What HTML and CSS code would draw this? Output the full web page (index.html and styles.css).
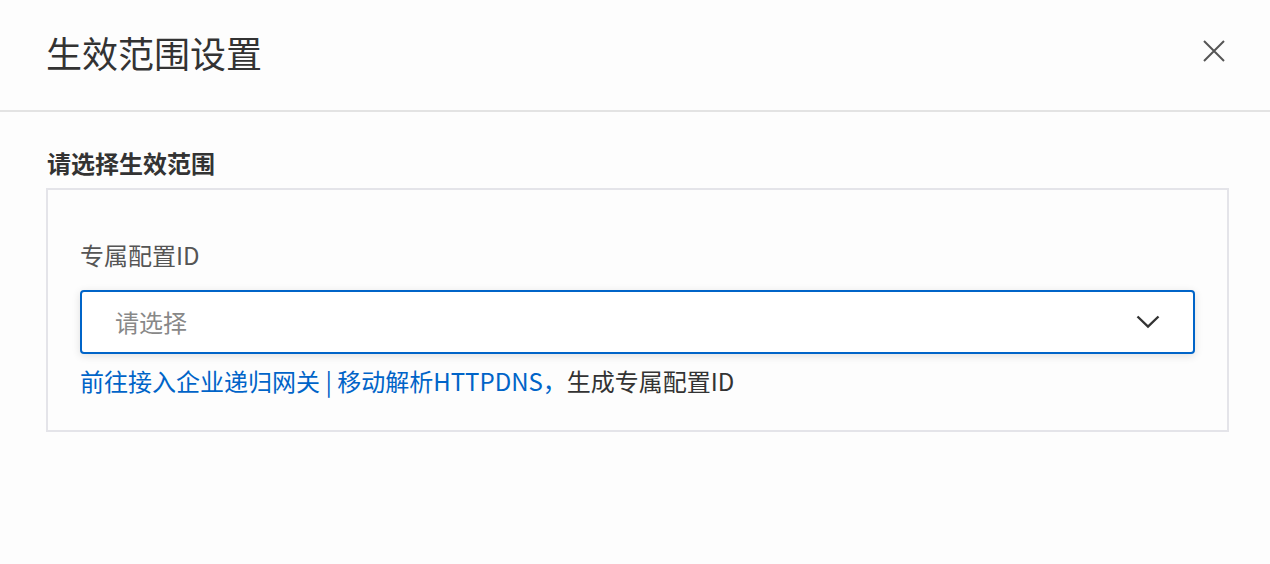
FILE: index.html
```html
<!DOCTYPE html>
<html lang="zh-CN">
<head>
<meta charset="utf-8">
<title>生效范围设置</title>
<link rel="stylesheet" href="styles.css">
</head>
<body>
<div class="dialog">
  <header class="dialog-header">
    <h1 class="dialog-title">生效范围设置</h1>
    <button class="close-btn" aria-label="关闭">
      <svg width="22" height="22" viewBox="0 0 22 22"><path d="M1 1L21 21M21 1L1 21" stroke="#555" stroke-width="2" fill="none"/></svg>
    </button>
  </header>
  <main class="dialog-body">
    <div class="section-title">请选择生效范围</div>
    <div class="scope-box">
      <div class="field-label">专属配置ID</div>
      <div class="select">
        <span class="placeholder">请选择</span>
        <svg class="chevron" width="24" height="14" viewBox="0 0 24 14"><path d="M1.5 1.5L12 11.5L22.5 1.5" stroke="#333" stroke-width="2.4" fill="none"/></svg>
      </div>
      <div class="help"><a class="link" href="#">前往接入企业递归网关 | 移动解析HTTPDNS</a><span class="link">，</span>生成专属配置ID</div>
    </div>
  </main>
</div>
</body>
</html>
```

FILE: styles.css
```css
html, body {
  margin: 0;
  padding: 0;
}
body {
  background: #fdfdfd;
  font-family: "Noto Sans CJK SC", "Noto Sans", sans-serif;
  color: #333;
  width: 1270px;
  height: 564px;
  overflow: hidden;
}
.dialog {
  display: flex;
  flex-direction: column;
}
.dialog-header {
  height: 110px;
  box-sizing: border-box;
  border-bottom: 2px solid #e3e3e3;
  display: flex;
  align-items: center;
  justify-content: space-between;
  padding: 0 45px 6px 46px;
  height: 112px;
}
.dialog-title {
  margin: 0;
  font-size: 36px;
  font-weight: 400;
  line-height: 48px;
  color: #333;
}
.close-btn {
  border: 0;
  background: transparent;
  padding: 0;
  width: 22px;
  height: 22px;
  display: flex;
  margin-top: -2px;
}
.dialog-body {
  padding: 34px 41px 0 46px;
}
.section-title {
  font-size: 24px;
  font-weight: 700;
  line-height: 34px;
  color: #333;
  margin-bottom: 8px;
  padding-left: 1px;
}
.scope-box {
  border: 2px solid #e4e4e9;
  padding: 48px 32px 32px 32px;
}
.field-label {
  font-size: 24px;
  line-height: 34px;
  color: #555;
  margin-bottom: 18px;
}
.select {
  height: 64px;
  box-sizing: border-box;
  border: 2px solid #0064c8;
  border-radius: 4px;
  background: #fff;
  box-shadow: 0 2px 8px rgba(0, 0, 0, 0.12);
  display: flex;
  align-items: center;
  justify-content: space-between;
  padding: 0 33px 0 33px;
}
.placeholder {
  font-size: 24px;
  color: #888;
  line-height: 34px;
}
.chevron {
  display: block;
}
.help {
  margin-top: 10px;
  font-size: 24px;
  line-height: 34px;
  color: #333;
}
.link {
  color: #0064c8;
  text-decoration: none;
}
```
